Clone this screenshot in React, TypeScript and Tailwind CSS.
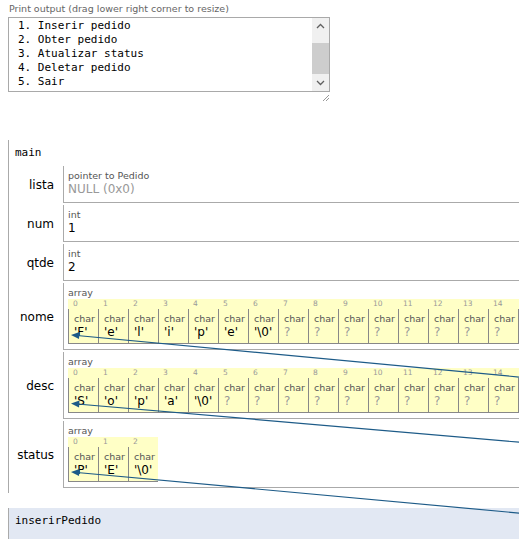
const sans = "font-['DejaVu_Sans',Verdana,sans-serif]"
const mono = "font-['DejaVu_Sans_Mono','Liberation_Mono',monospace]"

const outputLines = [
  '1. Inserir pedido',
  '2. Obter pedido',
  '3. Atualizar status',
  '4. Deletar pedido',
  '5. Sair',
]

function toCells(s: string, total: number) {
  const cells: string[] = []
  for (const ch of s) cells.push(`'${ch}'`)
  cells.push("'\\0'")
  while (cells.length < total) cells.push('?')
  return cells
}

// only the first 15 cells are visible in the window; the rest are empty frames
function CharArray({ cells, extra = 0 }: { cells: string[]; extra?: number }) {
  return (
    <div className="flex flex-col">
      <div className="text-[9.5px] leading-[12px] text-[#555]">array</div>
      <div className="flex">
        {cells.map((v, i) => (
          <div key={i} className="w-[30px] shrink-0 bg-[#ffffc6] flex flex-col">
            <div className="h-[10px] pl-[5px] text-[7.5px] leading-[10px] text-[#999]">{i}</div>
            <div className="h-[35px] border-l border-b border-[#888] pl-[5px] pt-[4px]">
              <div className="text-[9.5px] leading-[12px] text-[#555]">char</div>
              <div
                className={
                  v === '?'
                    ? 'text-[12px] leading-[15px] text-[#999]'
                    : 'text-[12px] leading-[15px] text-black'
                }
              >
                {v}
              </div>
            </div>
          </div>
        ))}
        {Array.from({ length: extra }).map((_, i) => (
          <div key={'x' + i} className="w-[30px] shrink-0 bg-[#ffffc6] flex flex-col">
            <div className="h-[10px]" />
            <div className="h-[35px] border-l border-b border-[#888]" />
          </div>
        ))}
      </div>
    </div>
  )
}

function VarRow({
  name,
  tall,
  children,
}: {
  name: string
  tall?: boolean
  children: React.ReactNode
}) {
  return (
    <div className={tall ? 'flex h-[67px]' : 'flex h-[37px]'}>
      <div className="w-[54px] shrink-0 pr-[9px] flex items-center justify-end text-[12px] text-black">
        {name}
      </div>
      <div className="flex-1 border-l border-b border-[#aaa] pl-[4px] pt-[4px] overflow-hidden">
        {children}
      </div>
    </div>
  )
}

function Scalar({ type, value, muted }: { type: string; value: string; muted?: boolean }) {
  return (
    <div>
      <div className="text-[9.5px] leading-[12px] text-[#555]">{type}</div>
      <div className={muted ? 'text-[12px] leading-[15px] text-[#999]' : 'text-[12px] leading-[15px] text-black'}>
        {value}
      </div>
    </div>
  )
}

export default function App() {
  return (
    <div className={`relative w-[519px] h-[539px] overflow-hidden bg-white ${sans}`}>
      <div className="pl-[9px] pt-[3px] text-[9.5px] leading-[12px] text-[#666]">
        Print output (drag lower right corner to resize)
      </div>
      <div className="ml-[8px] mt-[2px] w-[322px] h-[75px] border border-[#a9a9a9] flex">
        <div className={`flex-1 pl-[9px] pt-[1px] text-[11px] leading-[14px] text-black whitespace-pre ${mono}`}>
          {outputLines.map((l) => (
            <div key={l}>{l}</div>
          ))}
        </div>
        <div className="w-[17px] bg-[#f0f0f0] flex flex-col items-center">
          <svg width="17" height="17" viewBox="0 0 17 17">
            <polyline points="5,10 8.5,6.5 12,10" fill="none" stroke="#606060" strokeWidth="1.3" />
          </svg>
          <div className="w-[17px] h-[31px] mt-[8px] bg-[#cdcdcd]" />
          <div className="flex-1" />
          <svg width="17" height="17" viewBox="0 0 17 17">
            <polyline points="5,7 8.5,10.5 12,7" fill="none" stroke="#606060" strokeWidth="1.3" />
          </svg>
        </div>
      </div>
      <div className="w-[330px] flex justify-end pt-[2px]">
        <svg width="8" height="8" viewBox="0 0 8 8">
          <line x1="7" y1="1" x2="1" y2="7" stroke="#999" strokeWidth="1" />
          <line x1="7" y1="4" x2="4" y2="7" stroke="#999" strokeWidth="1" />
        </svg>
      </div>

      <div className="mt-[38px] ml-[8px] w-[700px] border-l border-[#aaa] pb-[5px]">
        <div className={`pl-[6px] pt-[6px] text-[11px] leading-[14px] text-black ${mono}`}>main</div>
        <div className="mt-[6px] flex flex-col gap-[2px]">
          <VarRow name="lista">
            <Scalar type="pointer to Pedido" value="NULL (0x0)" muted />
          </VarRow>
          <VarRow name="num">
            <Scalar type="int" value="1" />
          </VarRow>
          <VarRow name="qtde">
            <Scalar type="int" value="2" />
          </VarRow>
          <VarRow name="nome" tall>
            <CharArray cells={toCells('Felipe', 15)} extra={3} />
          </VarRow>
          <VarRow name="desc" tall>
            <CharArray cells={toCells('Sopa', 15)} extra={3} />
          </VarRow>
          <VarRow name="status" tall>
            <CharArray cells={toCells('PE', 3)} />
          </VarRow>
        </div>
      </div>

      <div className="mt-[15px] ml-[8px] w-[700px] h-[40px] border-l border-[#aaa] bg-[#e2e8f3]">
        <div className={`pl-[6px] pt-[6px] text-[11px] leading-[14px] text-black ${mono}`}>inserirPedido</div>
      </div>

      <svg className="absolute inset-0 pointer-events-none" width="519" height="539" viewBox="0 0 519 539">
        <g stroke="#1d5b88" strokeWidth="1.2" fill="none">
          <line x1="77" y1="335.5" x2="540" y2="379" />
          <line x1="77" y1="404" x2="540" y2="444" />
          <line x1="77" y1="472.5" x2="540" y2="515" />
        </g>
        <g fill="#1d5b88">
          <polygon points="71,335 79.5,332 79,339" />
          <polygon points="71,403.5 79.5,400.6 79,407.4" />
          <polygon points="71,472 79.5,469 79,476" />
        </g>
      </svg>
    </div>
  )
}
